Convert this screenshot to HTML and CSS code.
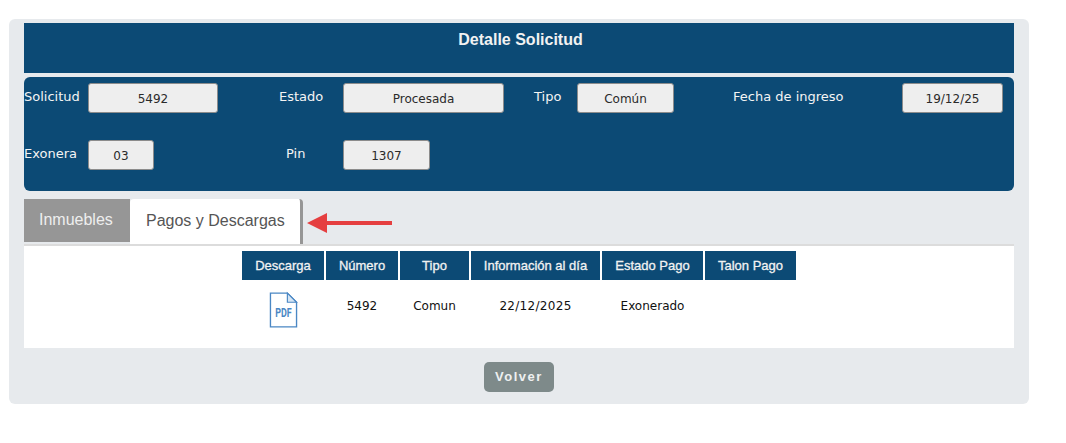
FILE: index.html
```html
<!DOCTYPE html>
<html lang="es">
<head>
<meta charset="utf-8">
<title>Detalle Solicitud</title>
<link rel="stylesheet" href="styles.css">
</head>
<body>
<main class="panel">
  <h1 class="title">Detalle Solicitud</h1>
  <section class="info">
    <span class="label">Solicitud</span><span class="field f-sol">5492</span>
    <span class="label">Estado</span><span class="field f-est">Procesada</span>
    <span class="label">Tipo</span><span class="field f-tipo">Común</span>
    <span class="label">Fecha de ingreso</span><span class="field f-fecha">19/12/25</span>
    <span class="label">Exonera</span><span class="field f-exo">03</span>
    <span class="label label-pin">Pin</span><span class="field f-pin">1307</span>
  </section>
  <nav class="tabs">
    <span class="tab tab-off">Inmuebles</span>
    <span class="tab tab-on">Pagos y Descargas</span>
    <svg class="arrow" width="86" height="22" viewBox="0 0 86 22" aria-hidden="true"><path d="M0 11 20 1V9H85V13H20V21Z" fill="#e53f40"/></svg>
  </nav>
  <section class="content">
    <table class="grid">
      <thead>
        <tr>
          <th class="c1">Descarga</th><th class="c2">Número</th><th class="c3">Tipo</th><th class="c4">Información al día</th><th class="c5">Estado Pago</th><th class="c6">Talon Pago</th>
        </tr>
      </thead>
      <tbody>
        <tr>
          <td>
            <svg class="pdf" width="29" height="38" viewBox="0 0 30 38" aria-hidden="true">
              <path d="M1.5 1.5H19L28.5 11V36.5H1.5Z" fill="#fff" stroke="#4a87c4" stroke-width="1.4"/>
              <path d="M19 1.5V11H28.5Z" fill="#d6e6f5" stroke="#4a87c4" stroke-width="1.2"/>
              <text x="15" y="26" class="pdf-text" text-anchor="middle" textLength="17" lengthAdjust="spacingAndGlyphs">PDF</text>
            </svg>
          </td>
          <td>5492</td><td>Comun</td><td class="date">22/12/2025</td><td>Exonerado</td><td></td>
        </tr>
      </tbody>
    </table>
  </section>
  <div class="actions"><button class="back" type="button">Volver</button></div>
</main>
</body>
</html>
```
FILE: styles.css
```css
* { box-sizing: border-box; }
html, body { margin: 0; background: #fff; }
body { padding: 19px 37px 0 9px; font-family: "DejaVu Sans", sans-serif; }
.panel {
  width: 1020px;
  height: 385px;
  padding: 4px 15px 0;
  background: #e7eaed;
  border-radius: 6px;
}
.title {
  margin: 0;
  height: 50px;
  padding: 8px 0 0 3px;
  background: #0c4a75;
  color: #f2f2f2;
  font: bold 16px/18px "Liberation Sans", sans-serif;
  text-align: center;
}
.info {
  display: grid;
  grid-template-columns: 64px 191px 64px 191px 43px 156px 169px 112px;
  grid-template-rows: 30px 30px;
  row-gap: 27px;
  justify-items: start;
  align-items: start;
  margin-top: 4px;
  height: 114px;
  padding-top: 6px;
  background: #0c4a75;
  border-radius: 6px;
  color: #f4f4f4;
}
.label { font-size: 13px; line-height: 15px; padding-top: 6px; white-space: nowrap; }
.label-pin { padding-left: 7px; }
.field {
  display: block;
  height: 30px;
  background: #eeeeee;
  border: 1px solid #8c8c8c;
  border-radius: 3px;
  color: #2a2a2a;
  font-size: 12px;
  line-height: 30px;
  text-align: center;
}
.f-sol { width: 130px; }
.f-est { width: 161px; }
.f-tipo { width: 97px; }
.f-fecha { width: 101px; }
.f-exo { width: 66px; }
.f-pin { width: 87px; }
.tabs {
  position: relative;
  display: flex;
  align-items: flex-start;
  margin-top: 8px;
  height: 47px;
  border-bottom: 2px solid #dcdcdc;
}
.tab { font: 16px/18px "Liberation Sans", sans-serif; }
.tab-off {
  width: 106px;
  height: 43px;
  padding-top: 12px;
  padding-left: 15px;
  background: #969696;
  color: #eeeeee;
}
.tab-on {
  width: 173px;
  height: 45px;
  padding-top: 13px;
  padding-left: 16px;
  background: #fff;
  border-right: 3px solid #969696;
  border-radius: 4px 4px 0 0;
  color: #555;
}
.arrow { position: absolute; left: 283px; top: 13px; }
.content {
  height: 102px;
  padding-top: 5px;
  background: #fff;
}
.grid {
  width: 554px;
  margin: 0 auto;
  table-layout: fixed;
  border-collapse: separate;
  border-spacing: 0;
}
.grid th {
  height: 29px;
  padding: 0;
  border-left: 2px solid #fff;
  background: #0c4a75;
  background-clip: padding-box;
  color: #f2f2f2;
  font: 400 13px/15px "Liberation Sans", sans-serif;
  -webkit-text-stroke: 0.3px #f2f2f2;
  text-align: center;
}
.grid th:first-child { border-left: 0; }
.c1 { width: 82px; }
.c2 { width: 74px; }
.c3 { width: 71px; }
.c4 { width: 131px; }
.c5 { width: 103px; }
.c6 { width: 93px; }
.grid td {
  height: 56px;
  padding: 19px 0 0 2px;
  color: #111;
  font-size: 12px;
  line-height: 15px;
  text-align: center;
  vertical-align: top;
}
.grid td:first-child { padding: 11px 0 0; }
.grid td.date { letter-spacing: 0.3px; }
.pdf { display: block; margin: 0 auto; }
.pdf-text { fill: #4a87c4; font: bold 13.5px Roboto, sans-serif; }
.actions { display: flex; justify-content: center; padding-top: 14px; }
.back {
  width: 70px;
  height: 30px;
  padding: 0;
  border: 0;
  border-radius: 5px;
  background: #7e8a8a;
  color: #eef0f0;
  font: bold 13px/30px "Liberation Sans", sans-serif;
  letter-spacing: 1.5px;
}
```
